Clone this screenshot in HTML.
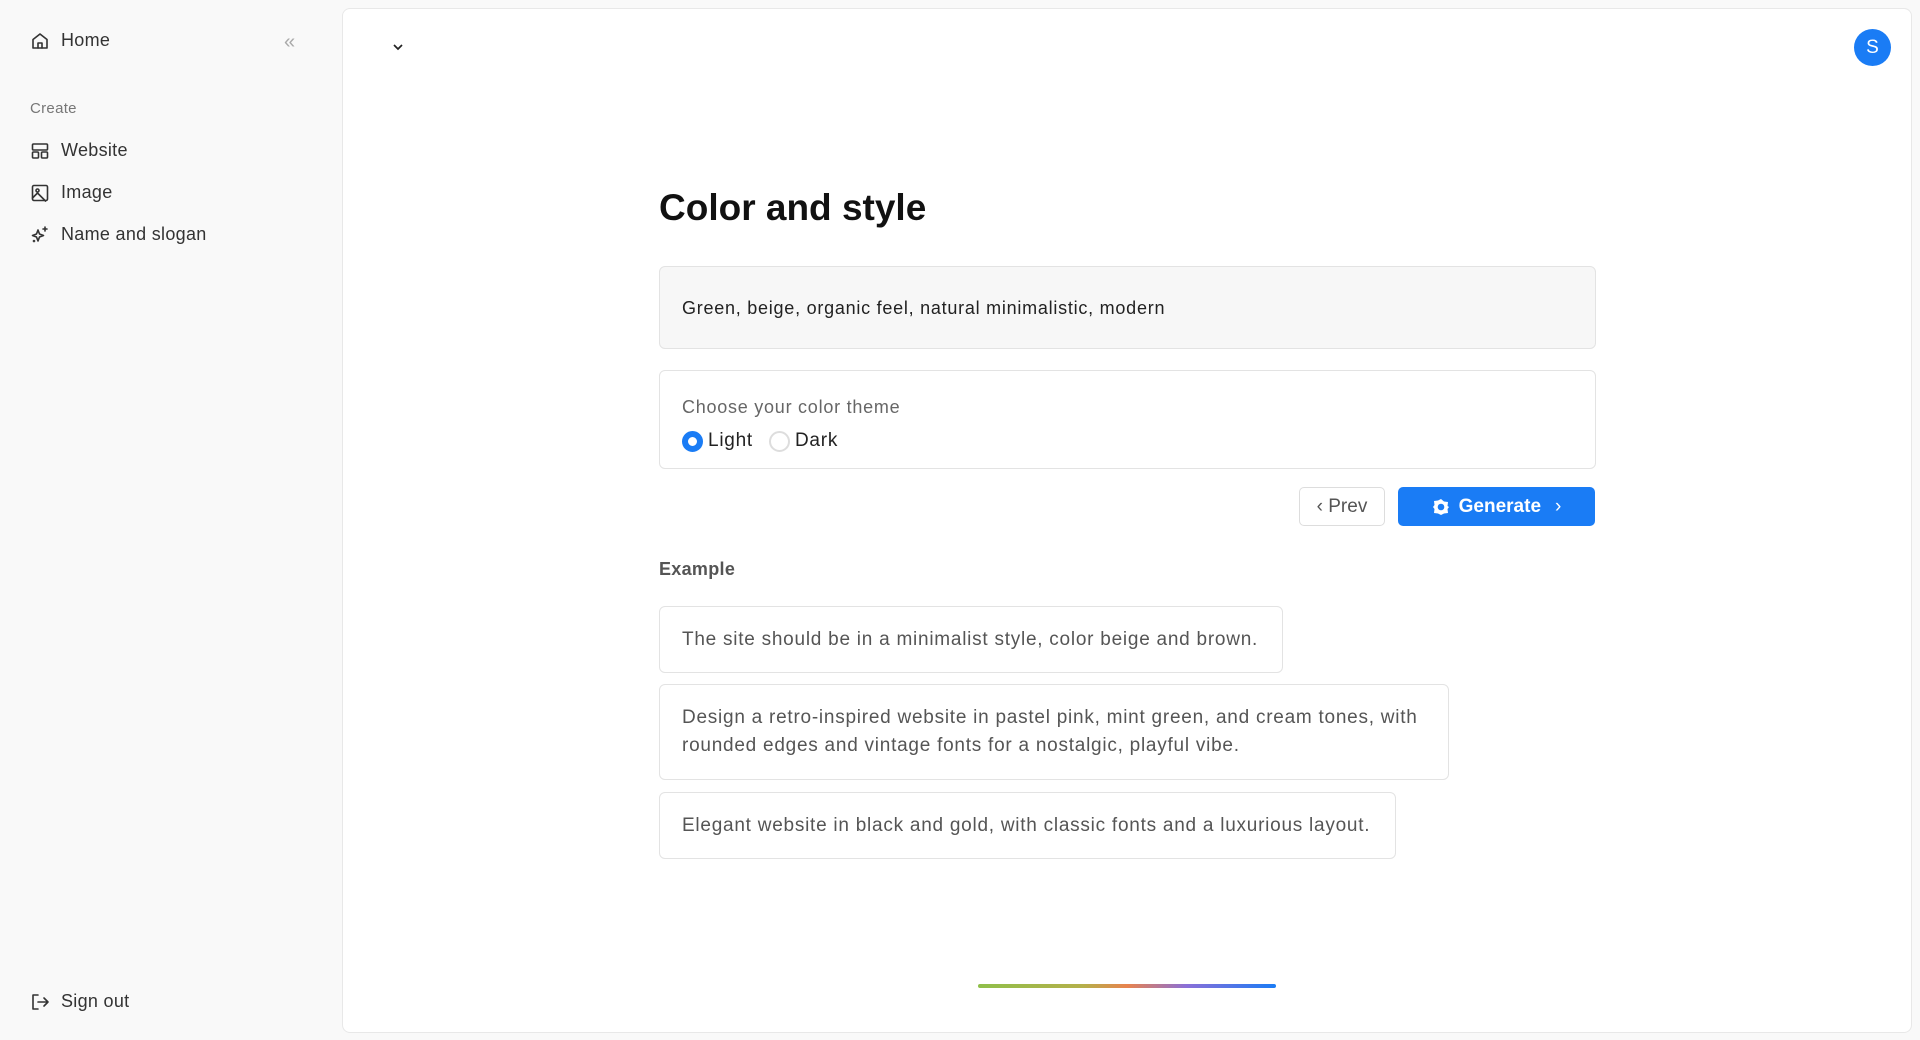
<!DOCTYPE html>
<html><head><meta charset="utf-8"><style>
*{box-sizing:border-box;margin:0;padding:0}
body{width:1920px;height:1040px;background:#f9f9f9;font-family:"Liberation Sans",sans-serif;color:#222;position:relative;overflow:hidden}
.a{position:absolute}
.nav{position:absolute;left:30px;display:flex;align-items:center;font-size:18px;color:#333;letter-spacing:0.3px}
.nav svg{width:20px;height:20px;margin-right:11px;fill:none;stroke:#333;stroke-width:1.6;stroke-linecap:round;stroke-linejoin:round}
.main{position:absolute;left:342px;top:8px;width:1570px;height:1025px;background:#fff;border:1px solid #e8e8e8;border-radius:8px}
.card{position:absolute;left:659px;border:1.5px solid #e3e3e3;border-radius:6px;background:#fff;font-size:19px;color:#555;padding:0 22px;line-height:28px;display:flex;align-items:center;letter-spacing:0.75px}
</style></head><body>
<div class="nav" style="top:30px"><svg viewBox="0 0 20 20"><path d="M3 8.5L10 3l7 5.5V17H3z"/><path d="M8 17v-5h4v5"/></svg>Home</div>
<div class="a" style="left:284px;top:31px;color:#aaa;font-size:20px">«</div>
<div class="a" style="left:30px;top:100px;font-size:15px;color:#777;letter-spacing:0.3px">Create</div>
<div class="nav" style="top:140px"><svg viewBox="0 0 20 20"><rect x="2.5" y="3" width="15" height="6" rx="1"/><rect x="2.5" y="11" width="6" height="6" rx="1"/><rect x="11.5" y="11" width="6" height="6" rx="1"/></svg>Website</div>
<div class="nav" style="top:182px"><svg viewBox="0 0 20 20"><rect x="2.5" y="2.5" width="15" height="15" rx="1.5"/><circle cx="7.5" cy="7.5" r="1.5"/><path d="M2.5 15l5-5 8 8"/></svg>Image</div>
<div class="nav" style="top:224px"><svg viewBox="0 0 20 20"><path d="M8 5l1.5 4 4 1.5-4 1.5L8 16l-1.5-4-4-1.5 4-1.5z"/><path d="M15 2v4M13 4h4"/><circle cx="4" cy="16" r=".5"/></svg>Name and slogan</div>
<div class="nav" style="top:991px"><svg viewBox="0 0 20 20"><path d="M8 3H3v14h5"/><path d="M8 10h10M14 6l4 4-4 4"/></svg>Sign out</div>

<div class="main"></div>
<svg class="a" style="left:391px;top:40px" width="14" height="14" viewBox="0 0 14 14"><path d="M3 5l4 4 4-4" fill="none" stroke="#222" stroke-width="1.7"/></svg>
<div class="a" style="left:1854px;top:29px;width:37px;height:37px;border-radius:50%;background:#1a7cf5;color:#fff;font-size:19px;display:flex;align-items:center;justify-content:center">S</div>

<div class="a" style="left:659px;top:187px;font-size:37px;font-weight:bold;color:#111">Color and style</div>
<div class="card" style="top:266px;width:937px;height:83px;background:#f7f7f7;color:#222;font-size:18px">Green, beige, organic feel, natural minimalistic, modern</div>
<div class="card" style="top:370px;width:937px;height:99px;display:block;padding-top:22px">
<div style="font-size:18px;color:#666">Choose your color theme</div>
<div style="display:flex;align-items:center;margin-top:6px;font-size:19px;color:#222">
<span style="width:21px;height:21px;border-radius:50%;border:6px solid #1a7cf5;margin-right:5px"></span>Light
<span style="width:21px;height:21px;border-radius:50%;border:2px solid #ddd;margin:0 5px 0 16px"></span>Dark</div></div>
<div class="a" style="left:1299px;top:487px;width:86px;height:39px;border:1.5px solid #ddd;border-radius:5px;font-size:19px;color:#555;display:flex;align-items:center;justify-content:center">‹&nbsp;Prev</div>
<div class="a" style="left:1398px;top:487px;width:197px;height:39px;background:#1a7cf5;border-radius:5px;font-size:19px;color:#fff;display:flex;align-items:center;justify-content:center;font-weight:bold">
<svg width="18" height="18" viewBox="0 0 18 18" style="margin-right:9px"><path d="M9 1l3 2.5 4 .5-.5 4L17 9l-1.5 2 .5 4-4 .5L9 17l-3-1.5-4-.5.5-4L1 9l1.5-2-.5-4 4-.5z" fill="#fff"/><circle cx="9" cy="9" r="3.3" fill="#1a7cf5"/></svg>Generate<span style="margin-left:14px;font-weight:normal">›</span></div>
<div class="a" style="left:659px;top:559px;font-size:18px;font-weight:bold;color:#555;letter-spacing:0.3px">Example</div>
<div class="card" style="top:606px;width:624px;height:67px">The site should be in a minimalist style, color beige and brown.</div>
<div class="card" style="top:684px;width:790px;height:96px">Design a retro-inspired website in pastel pink, mint green, and cream tones, with rounded edges and vintage fonts for a nostalgic, playful vibe.</div>
<div class="card" style="top:792px;width:737px;height:67px">Elegant website in black and gold, with classic fonts and a luxurious layout.</div>
<div class="a" style="left:978px;top:984px;width:298px;height:4px;border-radius:2px;background:linear-gradient(90deg,#8fbf4a,#b4b04a 35%,#e8834e 50%,#8a6fd8 70%,#1a7cf5)"></div>
</body></html>
